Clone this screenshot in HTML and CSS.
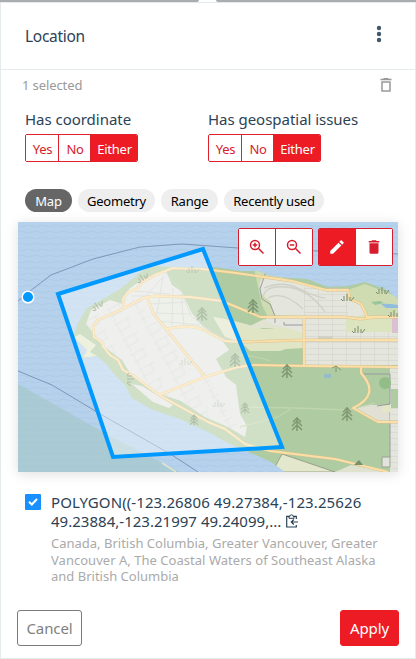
FILE: index.html
```
<!DOCTYPE html>
<html lang="en">
<head>
<meta charset="utf-8">
<title>Location filter</title>
<link rel="stylesheet" href="styles.css">
</head>
<body>
<div class="backdrop"><span class="tab tab-left"></span><span class="tab tab-right"></span></div>
<section class="panel">
  <header class="header">
    <h1 class="title">Location</h1>
    <svg class="more" width="6" height="18" viewBox="0 0 6 18"><circle cx="3" cy="3" r="2.2"/><circle cx="3" cy="9" r="2.2"/><circle cx="3" cy="15" r="2.2"/></svg>
  </header>
  <div class="summary">
    <span class="selected">1 selected</span>
    <svg width="12" height="14" viewBox="0 0 12 14"><path d="M.5 1.5h11M3.5 .8h5" stroke="#999" stroke-width="1.6"/><path d="M2 4h8v9H2z" fill="none" stroke="#999" stroke-width="1.5"/></svg>
  </div>
  <div class="options">
    <div class="option"><h2 class="label coordinate">Has coordinate</h2><div class="segments"><button class="seg yes">Yes</button><button class="seg no">No</button><button class="seg either">Either</button></div></div>
    <div class="option"><h2 class="label issues">Has geospatial issues</h2><div class="segments"><button class="seg yes">Yes</button><button class="seg no">No</button><button class="seg either">Either</button></div></div>
  </div>
  <nav class="pills"><button class="pill p-map">Map</button><button class="pill p-geometry">Geometry</button><button class="pill p-range">Range</button><button class="pill p-recent">Recently used</button></nav>
  <div class="map">
    <svg class="canvas" width="380" height="250" viewBox="18 222 380 250">
      <defs>
        <pattern id="waves" x="18" y="222" width="14" height="12" patternUnits="userSpaceOnUse"><path d="M0 4q3.500 2 7 0t7 0M-7 10q3.500 2 7 0t7 0t7 0" fill="none" stroke="#9fc0df" stroke-width=".7" opacity=".5"/></pattern>
        <clipPath id="land-clip"><path d="M73 336 L79 321 87 308 98 302 110 295 120 289 130 281 142 271 155 266 168 267 203 268 215 267 241 271 258 271 271 276 290 278 307 279 328 287 348 286 365 282 385 289 398 299 V472 H285 L271 462 251 453 228 443 208 432 180 419 153 410 132 398 125 385 115 375 107 365 97 356 83 358 87 350Z"/></clipPath>
        <g id="tree" fill="none" stroke="#7f9873" stroke-width="1.5"><path d="M0-7V7M-4-2L0-6L4-2M-5 2L0-3L5 2M-5 6L0 1L5 6"/></g>
        <g id="grass" fill="none" stroke="#7c8b68" stroke-width="1"><path d="M-6 1l2 2M-3-2v5M0-4v7M3-1v4M7-1l-3 4"/></g>
        <pattern id="blocks" x="304" y="276" width="14" height="6" patternUnits="userSpaceOnUse"><path d="M0 0H14M0 0V6" fill="none" stroke="#cdcec6" stroke-width=".9"/></pattern>
        <pattern id="campus" width="26" height="17" patternUnits="userSpaceOnUse" patternTransform="rotate(-28)"><path d="M0 1H18M3 0V15M14 0V9M0 9H14" fill="none" stroke="#ccd0ce" stroke-width=".6"/></pattern>
      </defs>
      <rect x="18" y="222" width="380" height="250" fill="#b5d1ec"/>
      <path d="M18 384L110 436 180 472H18Z" fill="#aacbd3"/>
      <rect x="18" y="222" width="380" height="250" fill="url(#waves)"/>
      <path d="M18 301L30 291 51 275 93 259 140 247 182 244 238 248 398 254M18 371L52 385 102 415 172 455 198 472" fill="none" stroke="#7386aa" stroke-width=".8"/>
      <g clip-path="url(#land-clip)">
        <rect x="70" y="260" width="328" height="212" fill="#afcba1"/>
        <path d="M254 268L271 274 292 280 328 291 348 290 365 284 398 297V329H274L262 305 259 292Z" fill="#cfdcb1"/>
        <path d="M73 338L80 334 96 345 90 352 97 356 83 358Z" fill="#e3e8c8"/>
        <path d="M86 324L91 310 110 300 123 304 129 289 140 281 166 271 172 285 182 292 191 312 202 326 221 339 229 350 216 359 226 377 236 385 240 414 247 426 245 437 228 427 205 417 181 401 160 394 143 383 130 373 122 360 102 345 95 335Z" fill="#e4e6e1"/>
        <path d="M150 297L182 294 191 312 202 326 221 339 215 342 190 329 166 328Z" fill="#e2e8db"/>
        <path d="M86 324L91 310 110 300 123 304 140 294 147 314 172 337 206 374 240 430 220 426 180 401 160 394 143 383 130 373 122 360 102 345Z" fill="url(#campus)"/>
        <path d="M139 280L165 272 181 291 191 316 205 327 232 344M134 291L170 294M132 296H179M149 304L186 302M153 313L191 314M158 321L200 325M145 297L164 276M157 312L163 277M172 325L173 288M184 325L181 294" fill="none" stroke="#c9cec6" stroke-width=".8"/>
        <path d="M132 384L142 386 173 405 169 408 153 402Z" fill="#e4e6e1"/>
        <path d="M213 317Q230 319 263 329L304 326V348L286 349 280 351H250L241 342 225 337Z" fill="#e0e5c6"/>
        <path d="M304 326H398V338H304Z" fill="#dde3c6"/>
        <path d="M246 328L264 319 290 328Z" fill="#dfe3d0"/>
        <path d="M261 294Q257 280 265 278L298 283 328 291H347V299L364 306 366 315 348 318 275 315 270 301Z" fill="#e4e5dc"/>
        <path d="M266 316H398V365H304V333L266 322Z" fill="#e4e5dc"/>
        <path d="M346 316H398V332H346Z" fill="#dce4bf"/>
        <rect x="304" y="287" width="44" height="30" fill="url(#blocks)"/><rect x="304" y="317" width="42" height="49" fill="url(#blocks)"/><rect x="346" y="332" width="52" height="34" fill="url(#blocks)"/>
        <path d="M263 299Q263 285 286 287T325 312M264 288Q282 280 300 289T325 298M268 298Q283 290 303 309" fill="none" stroke="#cfd0c7" stroke-width="1.300"/>
        <path d="M390 366H398V472H390Z" fill="#e4e5dc"/><rect x="390" y="366" width="14" height="106" fill="url(#blocks)"/>
        <path d="M353 408L370 405 389 405V422H380Z" fill="#e0e1d4"/><path d="M382 405H391V412H382Z" fill="#e4e7c7"/><path d="M391 389H398V408H391Z" fill="#afcba1"/>
        <path d="M392 318H398V333H392Z" fill="#dac0d1"/><path d="M318 336H333V341H318Z" fill="#d1d1c8"/>
        <path d="M282 454L335 472H270L275 467Z" fill="#e3e7cb" stroke="#8b957f" stroke-width=".8"/>
        <path d="M335 472L351 465 389 472Z" fill="#dfe2cf"/>
        <path d="M382 457H390V467H382Z" fill="#e2e3dd" stroke="#9aa28f"/>
        <path d="M362 374H390V404L377 406M390 422V457M284 322V325H303M268 266L260 289 262 299 270 304 275 316M275 316V323" fill="none" stroke="#999ba0" stroke-width="1"/>
        <path d="M240 355Q258 356 270 361M242 407L295 408 348 410 375 403M240 427L278 417 292 408" fill="none" stroke="#bfd5ae" stroke-width="1.300"/>
        <path d="M381 304q6-1 17 1v3h-12Z" fill="#90bce0"/><path d="M371 302l9-1 4 2-9 2Z" fill="#99c59a"/>
        <rect x="324" y="374" width="7" height="4" fill="#92bcc9"/><circle cx="385" cy="383" r="6" fill="#93bd88"/>
        <g fill="none" stroke="#dcc18c" stroke-width="2.800" stroke-linejoin="round"><path d="M124 309L123 299 128 292 137 289 142 282 155 275 173 268 203 269 236 273 264 277 292 281 326 290 348 290 350 299 361 304 365 312 367 317 398 317M104 345L99 340 94 337 93 326 98 320 123 309 143 298 153 296 190 297 222 301 251 313 260 317H345L360 319 377 317M147 297L153 313 166 329 192 361 206 378M166 329Q192 324 204 330T225 341L242 342 304 340H398M304 317V365M159 395L205 377 238 367 254 365 310 366 398 367M102 345L110 355 118 360 123 370 134 376 159 395 208 422 225 429 245 444 270 451 335 459 388 472M361 367V373Q381 395 353 408L378 422H398"/></g>
        <g fill="none" stroke="#fae0a8" stroke-width="1.900" stroke-linejoin="round"><path d="M124 309L123 299 128 292 137 289 142 282 155 275 173 268 203 269 236 273 264 277 292 281 326 290 348 290 350 299 361 304 365 312 367 317 398 317M104 345L99 340 94 337 93 326 98 320 123 309 143 298 153 296 190 297 222 301 251 313 260 317H345L360 319 377 317M147 297L153 313 166 329 192 361 206 378M166 329Q192 324 204 330T225 341L242 342 304 340H398M304 317V365M159 395L205 377 238 367 254 365 310 366 398 367M102 345L110 355 118 360 123 370 134 376 159 395 208 422 225 429 245 444 270 451 335 459 388 472M361 367V373Q381 395 353 408L378 422H398"/></g>
      </g>
      <path d="M162 463L176 472" stroke="#e0e5cf" stroke-width="1.500"/>
      <use href="#tree" x="202" y="314"/><use href="#tree" x="235" y="360"/><use href="#tree" x="253" y="306"/><use href="#tree" x="287" y="371"/><use href="#tree" x="297" y="424"/><use href="#tree" x="347" y="414"/>
      <path d="M332 368l4-2 5 4M336 366v6" fill="none" stroke="#7f9873"/><path d="M354 465l5-5 4 5Z" fill="#788f6d"/>
      <use href="#tree" transform="translate(245 408) scale(.8)"/><use href="#tree" transform="translate(194 420) scale(.8)"/>
      <use href="#grass" x="142" y="278" transform="rotate(-35 142 278)"/><use href="#grass" x="97" y="306" transform="rotate(-35 97 306)"/><use href="#grass" x="130" y="379" transform="rotate(90 130 379)"/><use href="#grass" x="382" y="291"/><use href="#grass" x="347" y="298"/><use href="#grass" x="394" y="314"/><use href="#grass" x="358" y="330"/><use href="#grass" x="185" y="362" opacity=".4"/><use href="#grass" x="218" y="404" opacity=".4"/><use href="#grass" x="192" y="270" opacity=".6"/>
      <path d="M58 294L203 249L282 447L113 457Z" fill="#fff" fill-opacity=".4" stroke="none"/>
      <path d="M58 294L203 249L282 447L113 457Z" fill="none" stroke="#0099ff" stroke-width="4"/>
      <circle cx="28" cy="297" r="5.800" fill="#0099ff" stroke="#fff" stroke-width="1.500"/>
    </svg>
    <div class="toolbar">
      <div class="tools"><button class="tool"><svg viewBox="0 0 18 18"><circle cx="7" cy="7" r="4.500"/><path d="M10.300 10.300L15.500 15.500M4.800 7h4.400M7 4.800v4.400"/></svg></button><button class="tool"><svg viewBox="0 0 18 18"><circle cx="7" cy="7" r="4.500"/><path d="M10.300 10.300L15.500 15.500M4.800 7h4.400"/></svg></button></div>
      <div class="tools"><button class="tool active"><svg class="solid" viewBox="0 0 24 24"><path d="M3 17.250V21h3.750L17.800 9.950l-3.750-3.750zM20.700 7.050c.4-.4.4-1 0-1.400l-2.350-2.350c-.4-.4-1-.4-1.400 0l-1.850 1.850 3.750 3.750z"/></svg></button><button class="tool"><svg class="solid" viewBox="0 0 24 24"><path d="M6 19c0 1.100.9 2 2 2h8c1.100 0 2-.9 2-2V7H6zM19 4h-3.500l-1-1h-5l-1 1H5v2h14z"/></svg></button></div>
    </div>
  </div>
  <div class="result">
    <span class="check"><svg width="10" height="8" viewBox="0 0 10 8"><path d="M1 3.800L3.800 6.500L9 1" fill="none" stroke="#fff" stroke-width="2"/></svg></span>
    <div class="details">
      <div class="wkt"><span class="w1">POLYGON((-123.26806 49.27384,-123.25626</span><br><span class="w2">49.23884,-123.21997 49.24099,...</span><svg class="clip" width="12" height="14" viewBox="0 0 12 14"><path d="M10.300 5V2.300H.7V13H10.300V11M12 8H5.500M7.800 5.500L5.300 8L7.800 10.500" fill="none" stroke="#2b4255" stroke-width="1.200"/><path d="M3 2.300h1a1.500 1.500 0 0 1 3 0h1v2H3z" fill="#fff" stroke="#2b4255" stroke-width="1"/></svg></div>
      <div class="places"><span class="l1">Canada, British Columbia, Greater Vancouver, Greater</span><br><span class="l2">Vancouver A, The Coastal Waters of Southeast Alaska</span><br><span class="l3">and British Columbia</span></div>
    </div>
  </div>
  <footer class="footer"><button class="cancel">Cancel</button><button class="apply">Apply</button></footer>
</section>
</body>
</html>
```
FILE: styles.css
```
* { box-sizing: border-box; }
body { margin: 0; width: 416px; height: 659px; overflow: hidden; background: #fff; font-family: "Noto Sans", "Open Sans", sans-serif; font-size: 14px; color: #2b4255; }
button { font: inherit; margin: 0; padding: 0; white-space: nowrap; }
h1, h2 { margin: 0; font-weight: 400; }
svg { display: block; flex: none; }
.backdrop { display: flex; justify-content: space-between; height: 2px; }
.tab { height: 2px; background: #a9adb0; }
.tab-left { width: 199px; border-bottom-right-radius: 3px; }
.tab-right { width: 200px; border-bottom-left-radius: 3px; }
.panel { height: 657px; border: 1px solid #e5eaed; display: flex; flex-direction: column; }
.header { height: 67px; flex: none; display: flex; justify-content: space-between; padding: 0 33px 0 24px; border-bottom: 1px solid #e5eaed; }
.title { font-size: 15.500px; line-height: 66px; letter-spacing: -.3px; }
.more { margin-top: 22px; fill: #40586b; }
.summary { height: 34px; flex: none; display: flex; justify-content: space-between; padding: 0 23px 0 21px; color: #999; font-size: 13px; line-height: 31px; letter-spacing: -.1px; }
.summary svg { margin-top: 8px; }
.options { display: flex; height: 84px; flex: none; padding-left: 24px; }
.option { width: 183px; }
.label { font-size: 15px; line-height: 21px; height: 30px; padding-top: 5px; letter-spacing: -.03px; white-space: nowrap; }
.segments { display: flex; width: 113px; height: 28px; border: 1px solid #e0202a; border-radius: 2px; overflow: hidden; }
.seg { border: 0; border-right: 1px solid #e0202a; background: #fff; color: #d61c2d; font-size: 13px; line-height: 28px; letter-spacing: -.25px; padding-left: 1px; }
.yes { width: 33px; }
.no { width: 32px; }
.either { width: 46px; background: #ed1c24; color: #fff; border: 0; }
.pills { display: flex; gap: 6px; height: 34px; flex: none; padding: 1px 0 0 24px; }
.pill { border: 0; height: 23px; border-radius: 12px; background: #eee; color: #000; font-size: 13px; line-height: 24px; letter-spacing: -.25px; }
.p-map { width: 47px; background: #666; color: #fff; }
.p-geometry { width: 77px; }
.p-range { width: 57px; }
.p-recent { width: 100px; }
.map { width: 380px; height: 250px; flex: none; margin-left: 17px; display: grid; box-shadow: 0 2px 12px rgba(0, 0, 0, .13); }
.canvas, .toolbar { grid-area: 1 / 1; }
.toolbar { display: flex; justify-content: flex-end; gap: 5px; padding: 6px 5px 0 0; z-index: 1; }
.tools { display: flex; width: 75px; height: 38px; border: 1px solid #d61c2d; border-radius: 2px; background: #fff; overflow: hidden; }
.tool { width: 37px; height: 36px; border: 0; background: #fff; display: flex; justify-content: center; align-items: center; }
.tool:first-child { border-right: 1px solid #d61c2d; }
.tool svg { width: 18px; height: 18px; fill: none; stroke: #d61c2d; stroke-width: 1.500; }
.tool .solid { fill: #d61c2d; stroke: none; }
.tool.active { background: #ed1c24; border-color: #ed1c24; }
.active .solid { fill: #fff; }
.result { display: flex; padding: 21px 0 0 24px; height: 138px; flex: none; }
.check { width: 16px; height: 16px; margin-top: 1px; border-radius: 1px; background: #1890ff; display: flex; align-items: center; justify-content: center; }
.details { margin-left: 10px; white-space: nowrap; }
.wkt { font-size: 15px; line-height: 19px; height: 42px; }
.w1 { letter-spacing: .1px; }
.w2 { letter-spacing: .02px; }
.clip { display: inline-block; margin-left: 5px; vertical-align: -1px; }
.places { color: #aaa; font-size: 13px; line-height: 16.500px; }
.l2 { letter-spacing: .03px; }
.footer { display: flex; justify-content: space-between; padding: 0 16px; }
.cancel, .apply { height: 36px; border-radius: 3px; font-size: 15px; line-height: 34px; letter-spacing: -.1px; }
.cancel { width: 65px; border: 1px solid #7b7b7b; background: #fff; color: #7f7f7f; }
.apply { width: 59px; border: 1px solid #ed1c24; background: #ed1c24; color: #fff; }
```
